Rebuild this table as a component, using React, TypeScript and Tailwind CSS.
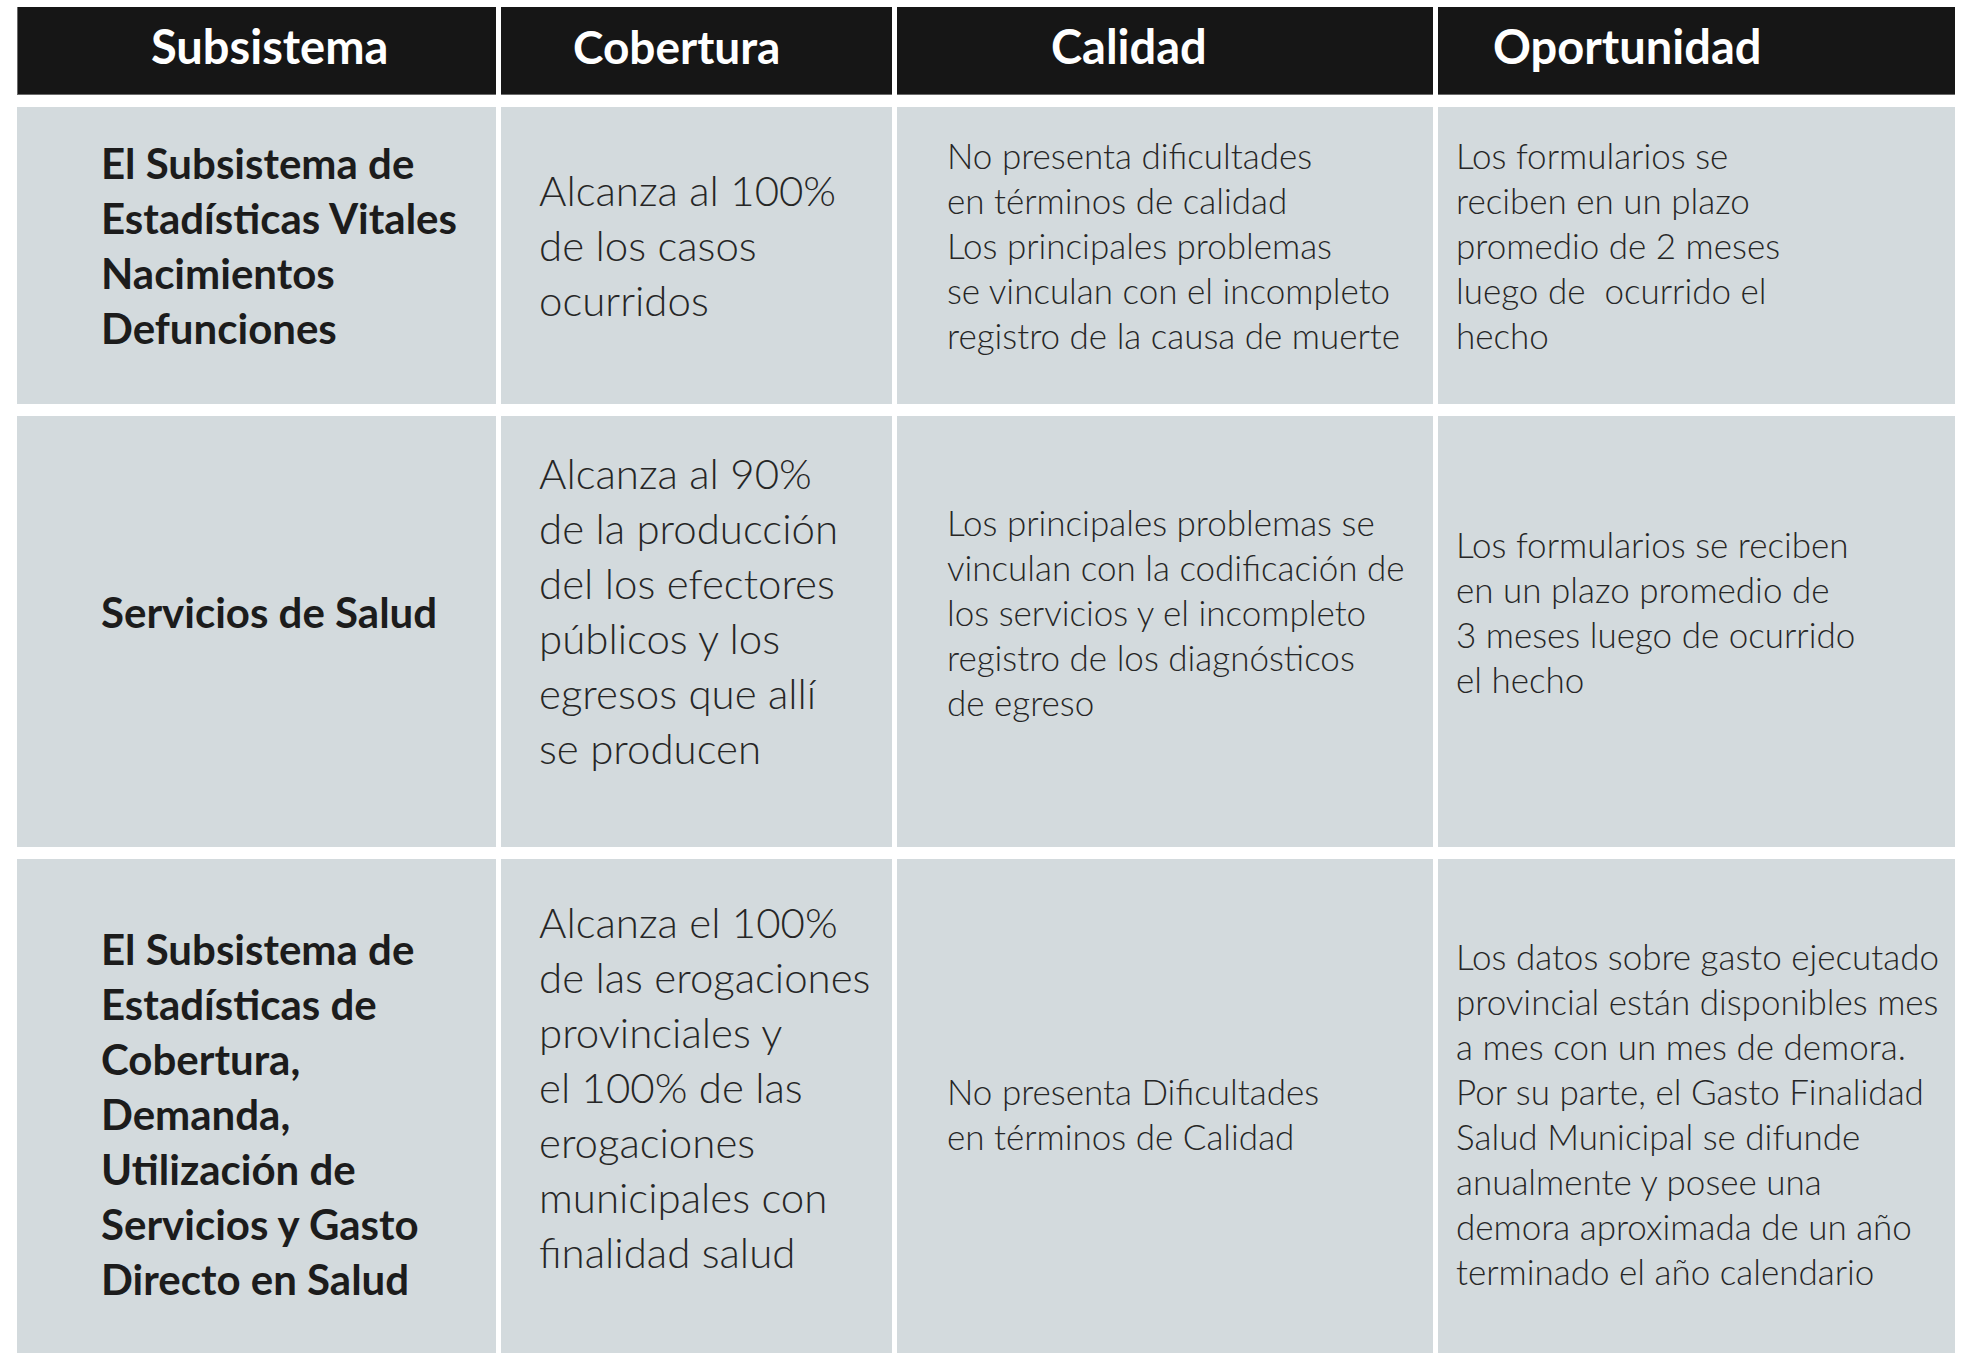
import React from "react";

const font = { fontFamily: "Lato, 'Open Sans', sans-serif" };

function Lines({ lines }: { lines: string[] }) {
  return (
    <>
      {lines.map((l, i) => (
        <span key={i} className="block whitespace-pre">
          {l}
        </span>
      ))}
    </>
  );
}

type Row = {
  h: string;
  sub: string[];
  cob: string[];
  cal: string[];
  opo: string[];
  pad: string;
  cobPad: string;
};

const rows: Row[] = [
  {
    h: "h-[297px]",
    pad: "pb-[20px]",
    cobPad: "pb-[20px]",
    sub: ["El Subsistema de", "Estadísticas Vitales", "Nacimientos", "Defunciones"],
    cob: ["Alcanza al 100%", "de los casos", "ocurridos"],
    cal: [
      "No presenta dificultades",
      "en términos de calidad",
      "Los principales problemas",
      "se vinculan con el incompleto",
      "registro de la causa de muerte",
    ],
    opo: ["Los formularios se", "reciben en un plazo", "promedio de 2 meses", "luego de  ocurrido el", "hecho"],
  },
  {
    h: "h-[431px]",
    pad: "pb-[39px]",
    cobPad: "pb-[42px]",
    sub: ["Servicios de Salud"],
    cob: ["Alcanza al 90%", "de la producción", "del los efectores", "públicos y los", "egresos que allí", "se producen"],
    cal: [
      "Los principales problemas se",
      "vinculan con la codificación de",
      "los servicios y el incompleto",
      "registro de los diagnósticos",
      "de egreso",
    ],
    opo: ["Los formularios se reciben", "en un plazo promedio de", "3 meses luego de ocurrido", "el hecho"],
  },
  {
    h: "h-[494px]",
    pad: "pt-[16px]",
    cobPad: "pb-[38px]",
    sub: [
      "El Subsistema de",
      "Estadísticas de",
      "Cobertura,",
      "Demanda,",
      "Utilización de",
      "Servicios y Gasto",
      "Directo en Salud",
    ],
    cob: [
      "Alcanza el 100%",
      "de las erogaciones",
      "provinciales y",
      "el 100% de las",
      "erogaciones",
      "municipales con",
      "finalidad salud",
    ],
    cal: ["No presenta Dificultades", "en términos de Calidad"],
    opo: [
      "Los datos sobre gasto ejecutado",
      "provincial están disponibles mes",
      "a mes con un mes de demora.",
      "Por su parte, el Gasto Finalidad",
      "Salud Municipal se difunde",
      "anualmente y posee una",
      "demora aproximada de un año",
      "terminado el año calendario",
    ],
  },
];

export default function App() {
  return (
    <div className="w-[1986px] h-[1354px] overflow-hidden bg-white pt-[7px] pl-[17px]" style={font}>
      <div className="grid grid-cols-[479px_391px_536px_517px] gap-x-[5px] gap-y-[12px]">
        <div className="h-[88px] bg-[#161616] border-l border-b border-[#6b6b6b] flex items-center pl-[133px] pb-[8px] text-white font-bold text-[47px]">
          Subsistema
        </div>
        <div className="h-[88px] bg-[#161616] border-b border-[#6b6b6b] flex items-center pl-[72px] pb-[8px] text-white font-bold text-[46px]">
          Cobertura
        </div>
        <div className="h-[88px] bg-[#161616] border-b border-[#6b6b6b] flex items-center pl-[154px] pb-[8px] text-white font-bold text-[47px]">
          Calidad
        </div>
        <div className="h-[88px] bg-[#161616] border-b border-[#6b6b6b] flex items-center pl-[55px] pb-[8px] text-white font-bold text-[47px]">
          Oportunidad
        </div>
        {rows.map((r, i) => (
          <React.Fragment key={i}>
            <div className={`${r.h} ${r.pad} bg-[#d3dadd] flex items-center pl-[84px] text-[#1c1c1c] font-bold text-[42px] leading-[55px]`}>
              <div>
                <Lines lines={r.sub} />
              </div>
            </div>
            <div className={`${r.h} ${r.cobPad} bg-[#d3dadd] flex items-center pl-[38px] text-[#262626] font-light text-[42px] leading-[55px]`}>
              <div>
                <Lines lines={r.cob} />
              </div>
            </div>
            <div className={`${r.h} ${r.pad} bg-[#d3dadd] flex items-center pl-[50px] text-[#262626] font-light text-[35px] leading-[45px]`}>
              <div>
                <Lines lines={r.cal} />
              </div>
            </div>
            <div className={`${r.h} ${r.pad} bg-[#d3dadd] flex items-center pl-[18px] text-[#262626] font-light text-[35px] leading-[45px]`}>
              <div>
                <Lines lines={r.opo} />
              </div>
            </div>
          </React.Fragment>
        ))}
      </div>
    </div>
  );
}
